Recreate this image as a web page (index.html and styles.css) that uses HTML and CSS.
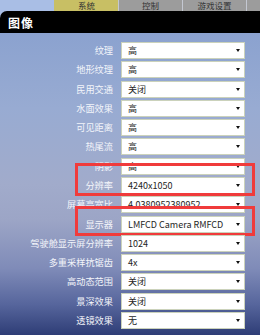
FILE: index.html
```html
<!DOCTYPE html>
<html lang="zh">
<head>
    <meta charset="UTF-8">
    <meta name="viewport" content="width=device-width, initial-scale=1.0">
    <title>图像设置</title>
    <link rel="stylesheet" href="styles.css">
</head>
<body>
    <div class="page">
        <div class="tabbar">
            <div class="tab-spacer"></div>
            <div class="tab active">系统</div>
            <div class="tab">控制</div>
            <div class="tab">游戏设置</div>
            <div class="tab"></div>
        </div>
        <div class="panel-head">
            <h1>图像</h1>
        </div>
        <div class="settings">
            <div class="row">
                <label>纹理</label>
                <div class="select">高</div>
            </div>
            <div class="row">
                <label>地形纹理</label>
                <div class="select">高</div>
            </div>
            <div class="row">
                <label>民用交通</label>
                <div class="select">关闭</div>
            </div>
            <div class="row">
                <label>水面效果</label>
                <div class="select">高</div>
            </div>
            <div class="row">
                <label>可见距离</label>
                <div class="select">高</div>
            </div>
            <div class="row">
                <label>热尾流</label>
                <div class="select">高</div>
            </div>
            <div class="row">
                <label>阴影</label>
                <div class="select">高</div>
            </div>
            <div class="row">
                <label>分辨率</label>
                <div class="select">4240x1050</div>
                <div class="mark mark-res"></div>
            </div>
            <div class="row">
                <label>屏幕高宽比</label>
                <div class="select">4.0380952380952</div>
            </div>
            <div class="row">
                <label>显示器</label>
                <div class="select">LMFCD Camera RMFCD</div>
                <div class="mark mark-display"></div>
            </div>
            <div class="row">
                <label>驾驶舱显示屏分辨率</label>
                <div class="select">1024</div>
            </div>
            <div class="row">
                <label>多重采样抗锯齿</label>
                <div class="select">4x</div>
            </div>
            <div class="row">
                <label>高动态范围</label>
                <div class="select">关闭</div>
            </div>
            <div class="row">
                <label>景深效果</label>
                <div class="select">关闭</div>
            </div>
            <div class="row">
                <label>透镜效果</label>
                <div class="select">无</div>
            </div>
        </div>
    </div>
</body>
</html>
```

FILE: styles.css
```css
body {
    margin: 0;
    font-family: "Noto Sans CJK SC", "Noto Sans", sans-serif;
    background-color: #2e3d76;
}
.page {
    width: 260px;
    height: 335px;
    overflow: hidden;
    background: #a9bee5;
}
.tabbar {
    display: flex;
    height: 11px;
}
.tab-spacer {
    width: 54px;
    flex: none;
}
.tab {
    width: 63px;
    flex: none;
    background-color: #9c9c9c;
    border-left: 1px solid #c4c8d2;
    color: #333;
    font-size: 8.5px;
    line-height: 11px;
    text-align: center;
    overflow: hidden;
}
.tab.active {
    background-color: #c8bf64;
    border-left-color: #c8bf64;
}
.panel-head {
    height: 22px;
    background: #000;
    border-top-left-radius: 7px;
    display: flex;
    align-items: center;
    padding-left: 8px;
}
.panel-head h1 {
    margin: 0;
    color: #fff;
    font-size: 12px;
    font-weight: bold;
    letter-spacing: 1px;
}
.settings {
    height: 302px;
    padding-top: 9px;
    box-sizing: border-box;
    background: linear-gradient(#8ba2cf 0%, #98abd2 25%, #a1abcb 50%, #9ca5c6 62%, #7f8bb8 78%, #56659c 90%, #2e3d76 100%);
}
.row {
    position: relative;
    display: grid;
    grid-template-columns: 113px 124px;
    column-gap: 8px;
    height: 19.29px;
}
.row label {
    text-align: right;
    color: #f3f5fa;
    font-size: 9.2px;
    line-height: 17px;
    white-space: nowrap;
}
.select {
    position: relative;
    height: 17px;
    box-sizing: border-box;
    border: 1px solid #cbd2bb;
    background: #fff;
    color: #1e1e1e;
    font-size: 9px;
    line-height: 15px;
    padding-left: 6px;
}
.select::after {
    content: "";
    position: absolute;
    right: 4px;
    top: 6px;
    border-left: 2.5px solid transparent;
    border-right: 2.5px solid transparent;
    border-top: 3px solid #111;
}
.mark {
    position: absolute;
    left: 75px;
    width: 180px;
    border: 3px solid #f03b3b;
    box-sizing: border-box;
}
.mark-res {
    top: -14px;
    height: 33px;
}
.mark-display {
    top: -10px;
    height: 30px;
}
```
